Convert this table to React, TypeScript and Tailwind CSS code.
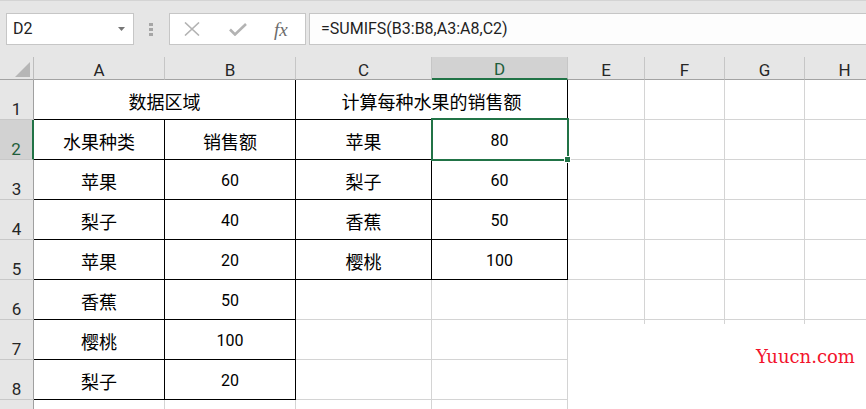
import React from "react";

type Cell = { t?: string; span?: number; r?: boolean; b?: boolean };

const COLS = ["A", "B", "C", "D", "E", "F", "G", "H"];

const box = (t: string): Cell => ({ t, r: true, b: true });
const empty = (n: number): Cell[] => Array.from({ length: n }, () => ({}));

const ROWS: Cell[][] = [
  [
    { t: "数据区域", span: 2, r: true, b: true },
    { t: "计算每种水果的销售额", span: 2, r: true, b: true },
    ...empty(4),
  ],
  [box("水果种类"), box("销售额"), box("苹果"), box("80"), ...empty(4)],
  [box("苹果"), box("60"), box("梨子"), box("60"), ...empty(4)],
  [box("梨子"), box("40"), box("香蕉"), box("50"), ...empty(4)],
  [box("苹果"), box("20"), box("樱桃"), box("100"), ...empty(4)],
  [box("香蕉"), box("50"), ...empty(6)],
  [box("樱桃"), box("100"), ...empty(6)],
  [box("梨子"), box("20"), ...empty(6)],
  empty(8),
];

function CellText({ t }: { t?: string }) {
  if (!t) return null;
  if (/^\d+$/.test(t)) {
    return (
      <span className="font-['Roboto',sans-serif] text-[16px] leading-none text-black">
        {t}
      </span>
    );
  }
  return (
    <span className="font-['Noto_Sans_CJK_SC',sans-serif] text-[18px] leading-none text-black">
      {t}
    </span>
  );
}

function Toolbar() {
  return (
    <div className="h-[57px] border-t border-[#d4d4d4] bg-[#e6e6e6] flex items-start pt-[12px] pl-[6px] font-['Roboto',sans-serif]">
      {/* name box */}
      <div className="w-[128px] h-[32px] border border-[#c6c6c6] bg-white flex items-center justify-between pl-[6px] pr-[8px] text-[16px] text-[#222]">
        <span>D2</span>
        <svg width="7" height="4" viewBox="0 0 7 4">
          <path d="M0 0H7L3.5 4Z" fill="#767676" />
        </svg>
      </div>

      {/* grip */}
      <div className="ml-[15px] mt-[10px] flex flex-col gap-[2px]">
        <div className="w-[4px] h-[3px] bg-[#a6a6a6]" />
        <div className="w-[4px] h-[3px] bg-[#a6a6a6]" />
        <div className="w-[4px] h-[3px] bg-[#a6a6a6]" />
      </div>

      {/* cancel / enter / fx */}
      <div className="ml-[16px] w-[137px] h-[32px] border border-[#c6c6c6] bg-white flex items-center pl-[14px]">
        <svg width="16" height="14" viewBox="0 0 16 14">
          <path d="M1 0.5L15 13.5M15 0.5L1 13.5" stroke="#b3b3b3" strokeWidth="1.6" />
        </svg>
        <svg className="ml-[29px]" width="18" height="13" viewBox="0 0 18 13">
          <path d="M1 6.5L6 11.5L17 1" stroke="#b3b3b3" strokeWidth="2.6" fill="none" />
        </svg>
        <span className="ml-[27px] font-['Liberation_Serif',serif] italic text-[19px] leading-none text-[#6b6b6b]">
          fx
        </span>
      </div>

      {/* formula */}
      <div className="ml-[3px] flex-1 h-[32px] border-y border-l border-[#c6c6c6] bg-[#fdfdfd] flex items-center pl-[11px] text-[16px] text-[#1f1f1f]">
        =SUMIFS(B3:B8,A3:A8,C2)
      </div>
    </div>
  );
}

function Sheet() {
  return (
    <div className="relative grid grid-cols-[34px_131px_131px_136px_136px_77px_80px_80px_80px] grid-rows-[23px_repeat(9,40px)]">
      {/* column headers */}
      <div className="bg-[#e6e6e6] border-r border-b border-r-[#bdbdbd] border-b-[#a3a3a3] flex items-end justify-end pr-[3px] pb-[2px]">
        <svg width="15" height="15" viewBox="0 0 15 15">
          <path d="M15 0V15H0Z" fill="#b6b6b6" />
        </svg>
      </div>
      {COLS.map((c) => (
        <div
          key={c}
          className={`border-r border-b border-r-[#c6c6c6] flex items-end justify-center font-['Roboto',sans-serif] text-[17px] leading-none ${
            c === "D"
              ? "bg-[#d2d2d2] border-b-2 border-b-[#217346] text-[#1e5e3b]"
              : "bg-[#e6e6e6] border-b-[#a3a3a3] text-[#262626]"
          }`}
        >
          {c}
        </div>
      ))}

      {ROWS.map((row, ri) => (
        <React.Fragment key={ri}>
          <div
            className={`flex items-end justify-center pb-[1px] border-b border-b-[#c8c8c8] font-['Roboto',sans-serif] text-[17px] leading-none ${
              ri === 1
                ? "bg-[#d2d2d2] border-r-2 border-r-[#217346] text-[#1e5e3b]"
                : "bg-[#e6e6e6] border-r border-r-[#a0a0a0] text-[#262626]"
            }`}
          >
            {ri + 1}
          </div>
          {row.map((cell, ci) => (
            <div
              key={ci}
              className={`flex items-center justify-center pt-[3px] border-r border-b ${
                cell.span === 2 ? "col-span-2" : ""
              } ${cell.r ? "border-r-black" : "border-r-[#d4d4d4]"} ${
                cell.b ? "border-b-black" : "border-b-[#d4d4d4]"
              }`}
            >
              <CellText t={cell.t} />
            </div>
          ))}
        </React.Fragment>
      ))}

      {/* selection on D2 */}
      <div className="absolute left-[431px] top-[61px] w-[138px] h-[43px] border-2 border-[#217346] pointer-events-none" />
      <div className="absolute left-[564px] top-[99px] w-[7px] h-[7px] bg-[#217346] border border-white" />

      {/* watermark patch */}
      <div className="absolute left-[568px] top-[267px] right-0 h-[100px] bg-white pl-[188px] pt-[21px]">
        <span className="font-['DejaVu_Serif',serif] text-[18px] leading-none text-[#f2132c]">
          Yuucn.com
        </span>
      </div>
    </div>
  );
}

export default function App() {
  return (
    <div className="w-[866px] h-[409px] overflow-hidden bg-white">
      <Toolbar />
      <Sheet />
    </div>
  );
}
